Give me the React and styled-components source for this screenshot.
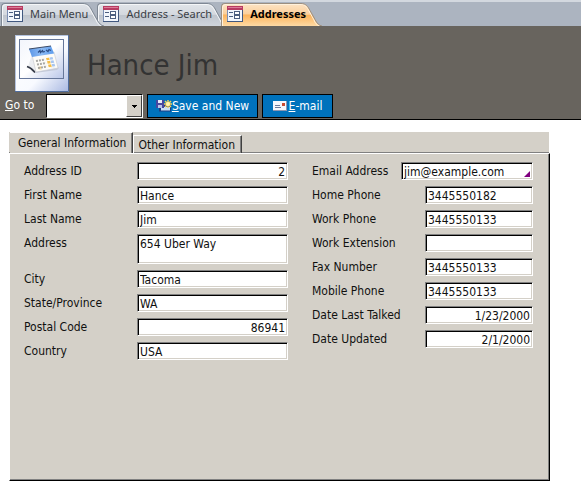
import React, { useState } from "react";
import styled, { createGlobalStyle } from "styled-components";

const GlobalStyle = createGlobalStyle`
  *, *::before, *::after {
    box-sizing: border-box;
  }

  body {
    margin: 0;
    background: #ffffff;
    color: #101010;
    font-family: "DejaVu Sans Condensed", "DejaVu Sans", sans-serif;
    font-size: 12px;
    line-height: 16px;
  }

  button, input, select, textarea {
    font: inherit;
    color: inherit;
    margin: 0;
    border-radius: 0;
  }
`;

/* document tabs */

const TabBar = styled.nav`
  display: flex;
  height: 26px;
  padding: 1px 0 0 1px;
  border-top: 2px solid #d3d8df;
  background: #acb4c0;
  isolation: isolate;
`;

const DocTab = styled.button`
  position: relative;
  z-index: ${(p) => p.$layer};
  display: flex;
  align-items: center;
  gap: 7px;
  height: 23px;
  padding: 0 9px 1px 6px;
  border: 0;
  background: none;
  color: ${(p) => (p.$active ? "#000000" : "#3b3f46")};
  font-family: "Noto Sans", "Open Sans", sans-serif;
  font-size: 11px;
  font-weight: ${(p) => (p.$active ? 700 : 400)};
  white-space: nowrap;

  > svg, > span {
    position: relative;
  }
`;

const TabShape = styled.i`
  position: absolute;
  inset: 0 -7px 0 0;
  display: flex;
`;

const TabFill = styled.i`
  flex: 1;
  border: solid ${(p) => (p.$active ? "#9c8f80" : "#7f8894")};
  border-width: 1px 0 0 1px;
  border-radius: 4px 0 0 0;
  box-shadow: inset 1px 1px 0 ${(p) => (p.$active ? "#fff1dc" : "#f4f6f8")};
  background: ${(p) =>
    p.$active
      ? "linear-gradient(#fde3c4 0, #fbd09c 45%, #fdb45c 50%, #fedaa4 100%)"
      : "linear-gradient(#e0e4e9 0, #d4d8de 50%, #bfc5cd 52%, #d0d5dc 100%)"};
`;

/* header */

const Header = styled.header`
  padding: 9px 0 1px;
  border-bottom: 1px solid #000000;
  background: #68645e;
`;

const TitleRow = styled.div`
  display: flex;
  align-items: center;
  gap: 18px;
  padding: 0 15px;
`;

const Title = styled.h1`
  margin: 0;
  padding-top: 4px;
  color: #333333;
  font-size: 29px;
  font-weight: 400;
  line-height: 53px;
`;

const Toolbar = styled.div`
  display: flex;
  gap: 4px;
  margin-top: 2px;
  padding-left: 5px;
  color: #ffffff;
`;

const GoToLabel = styled.label`
  width: 37px;
  line-height: 22px;
`;

const ComboBox = styled.div`
  position: relative;
  width: 97px;
  height: 24px;
`;

const ComboSelect = styled.select`
  appearance: none;
  width: 100%;
  height: 100%;
  padding: 0 18px 0 4px;
  border: 1px solid;
  border-color: #000000 #ffffff #ffffff #000000;
  background: #ffffff;
  color: #000000;
`;

const ComboArrow = styled.span`
  position: absolute;
  inset: 1px 1px 1px auto;
  display: flex;
  align-items: center;
  justify-content: center;
  width: 16px;
  border: 1px solid;
  border-color: #ffffff #404040 #404040 #ffffff;
  background: #d4d0c8;
  pointer-events: none;
`;

const ActionButton = styled.button`
  display: flex;
  align-items: center;
  justify-content: center;
  gap: ${(p) => p.$gap}px;
  min-width: ${(p) => p.$width}px;
  height: 24px;
  padding: 0 4px;
  border: 1px solid #000000;
  background: #0072bc;
  white-space: nowrap;
`;

/* tab control */

const Panel = styled.main`
  margin: 12px 31px 0 9px;
`;

const PageTabs = styled.div`
  display: flex;
  align-items: flex-end;
  height: 21px;
  margin-right: 1px;
  padding-left: 1px;
  background: linear-gradient(#808080, #808080) 0 100% / 100% 1px no-repeat #d4d0c8;
`;

const PageTab = styled.button`
  height: ${(p) => (p.$active ? 21 : 18)}px;
  padding: 0 6px 0 ${(p) => (p.$active ? 8 : 4)}px;
  border: solid;
  border-width: 1px 1px 0 ${(p) => (p.$active ? 0 : 1)}px;
  border-color: #ffffff #404040 #ffffff #ffffff;
  background: ${(p) =>
    p.$active
      ? "#d4d0c8"
      : "linear-gradient(#808080, #808080) 0 100% / 100% 1px no-repeat #d4d0c8"};
  box-shadow: inset -1px 0 0 #808080;
  white-space: nowrap;
`;

const Page = styled.form`
  display: grid;
  grid-template-columns: minmax(0, 264fr) minmax(0, 221fr);
  gap: 24px;
  align-items: start;
  min-height: 328px;
  padding: 8px 16px 16px 14px;
  border: 1px solid;
  border-color: #ffffff #000000 #000000 #ffffff;
  background: #d4d0c8;
  box-shadow: inset -1px -1px 0 #808080;
`;

const Column = styled.div`
  display: flex;
  flex-direction: column;
  gap: 6px;
`;

const Row = styled.div`
  display: flex;
  position: relative;
`;

const FieldLabel = styled.label`
  flex: none;
  width: ${(p) => (p.$narrow ? 89 : 113)}px;
  height: 18px;
  line-height: 18px;
  white-space: nowrap;
`;

const Field = styled.input`
  flex: 1;
  width: 0;
  min-width: 0;
  height: ${(p) => (p.$tall ? 30 : 18)}px;
  padding: 1px 2px 0;
  border: 1px solid;
  border-color: #808080 #ffffff #ffffff #808080;
  outline: none;
  background: #ffffff;
  box-shadow: inset 1px 1px 0 #000000, inset -1px -1px 0 #d4d0c8;
  line-height: 16px;
  text-align: ${(p) => (p.$right ? "right" : "left")};
  resize: none;
  overflow: hidden;
`;

const SmartTag = styled.i`
  position: absolute;
  right: 3px;
  bottom: 3px;
  border: 3px solid;
  border-color: transparent #800080 #800080 transparent;
`;

const FormIcon = () => (
  <svg width="16" height="16" viewBox="0 0 16 16" shapeRendering="crispEdges">
    <rect width="16" height="16" fill="#7d90b5" />
    <rect x="1" y="4" width="14" height="11" fill="#f3f7fd" />
    <rect width="16" height="4" fill="#b83c62" />
    <rect x="1" y="1" width="14" height="1" fill="#dc7c98" />
    <path d="M15 4h1v12H0v-1h15z" fill="#41587f" />
    <path d="M2 6h4v1H2zM2 10h4v1H2z" fill="#4c5f80" />
    <path d="M7.500 5.500h5v3h-5zM7.500 9.500h5v3h-5z" fill="#fff" stroke="#4c5f80" />
  </svg>
);

const TabCap = ({ active }) => {
  const id = active ? "cap-active" : "cap-plain";
  const stops = active
    ? ["#fde3c4", "#fbd09c", "#fdb45c", "#fedaa4"]
    : ["#e0e4e9", "#d4d8de", "#bfc5cd", "#d0d5dc"];
  return (
    <svg width="23" height="23" viewBox="0 0 23 23">
      <defs>
        <linearGradient id={id} x1="0" y1="0" x2="0" y2="1">
          <stop offset="0" stopColor={stops[0]} />
          <stop offset="0.48" stopColor={stops[1]} />
          <stop offset="0.52" stopColor={stops[2]} />
          <stop offset="1" stopColor={stops[3]} />
        </linearGradient>
      </defs>
      <path d="M0 .5h2c5 0 7 3 9 7l5 9c2 4 4 6 7 6.500H0z" fill={`url(#${id})`} />
      <path
        d="M0 1.500h2c4 0 6 3 8 6.500l5 9c1 3 3 5 5 6"
        fill="none"
        stroke={active ? "#fff1dc" : "#f4f6f8"}
      />
      <path
        d="M0 .5h2c5 0 7 3 9 7l5 9c2 4 4 6 7 6.500"
        fill="none"
        stroke={active ? "#9c8f80" : "#7f8894"}
      />
    </svg>
  );
};

const CalendarIcon = () => (
  <svg width="54" height="57" viewBox="0 0 54 57">
    <defs>
      <linearGradient id="card" x1="0" y1="0" x2="1" y2="1">
        <stop offset="0" stopColor="#ffffff" />
        <stop offset="0.6" stopColor="#f8faff" />
        <stop offset="1" stopColor="#a9b9e2" />
      </linearGradient>
      <linearGradient id="inner" x1="0" y1="0" x2="1" y2="1">
        <stop offset="0" stopColor="#f2f5fc" />
        <stop offset="0.5" stopColor="#ffffff" />
        <stop offset="1" stopColor="#b9c6e8" />
      </linearGradient>
      <linearGradient id="band" x1="0" y1="0" x2="1" y2="0">
        <stop offset="0" stopColor="#5b96e6" />
        <stop offset="0.5" stopColor="#8ebcf5" />
        <stop offset="1" stopColor="#5c9cee" />
      </linearGradient>
    </defs>
    <rect x=".5" y=".5" width="53" height="56" fill="url(#card)" stroke="#b4c3df" />
    <path d="M53.500 0v56.500H0" fill="none" stroke="#4f6d9e" />
    <rect x="4.500" y="4.500" width="44" height="39" fill="url(#inner)" stroke="#66779a" />
    <path d="M20 38l22-3 2-2-4-3-18 4z" fill="#c3cada" />
    <path d="M17 20l-4 11 7 7 2-2z" fill="#eceef2" />
    <path d="M12 31.500c3 1 6 3 8 6" fill="none" stroke="#353b48" strokeWidth="1.500" />
    <path d="M17 20l22-3 4 16-22 4z" fill="#fdfcf8" stroke="#c6c8ce" strokeWidth=".6" />
    <path d="M14 14l22-3 3 7.500-22 3.500z" fill="url(#band)" />
    <path d="M14 14l22-3" stroke="#3b4a66" />
    <path
      d="M23 17.500l2-2 .5 2 2-2 .5 1.500 2-.5M31 15l2 1.500 1-2 2 1"
      fill="none"
      stroke="#2e4f86"
      strokeWidth="1.200"
    />
    <path d="M31 23l3-.5 3 10-3 .5z" fill="#f6bd45" />
    <path d="M34.500 22.500l3-.5 3 10-3 .5z" fill="#a8c6f0" />
    <path d="M23 32l3-.5.7 3-3 .5z" fill="#f3c76a" />
    <path
      d="M20 24l19-3M21 27.500l19-3M21.700 31l19-3M22.500 34.500l19-3"
      fill="none"
      stroke="#fdfcf8"
      strokeWidth="1"
    />
    <path
      d="M21 26l9-1.500M22 29.500l9-1.500M23 33l9-1.500"
      fill="none"
      stroke="#a9a8a4"
      strokeWidth="2"
      strokeDasharray="2 1"
    />
  </svg>
);

const SaveNewIcon = () => (
  <svg width="16" height="12" viewBox="0 0 16 12">
    <path d="M3 4h12v7.500H3z" fill="#1d3d86" />
    <path d="M5 7h9v3.500H5z" fill="#c9def5" />
    <path d="M0 0h8v8H0z" fill="#4747a0" />
    <path d="M2 0h4v3H2z" fill="#e7ebf8" />
    <path d="M2 5h4v3H2z" fill="#b9c2e6" />
    <path
      d="M12 0v8M8 4h8M9 1l6 6M15 1l-6 6"
      stroke="#f2cf58"
      strokeWidth="1.500"
    />
    <circle cx="12" cy="4" r="2" fill="#fff3ae" />
  </svg>
);

const MailIcon = () => (
  <svg width="14" height="10" viewBox="0 0 14 10" shapeRendering="crispEdges">
    <rect width="14" height="10" fill="#8c97b3" />
    <rect width="13" height="9" fill="#f4f7fc" />
    <path d="M9 2h3v3H9z" fill="#c84a32" />
    <path d="M2 4h5v1H2zM2 6h6v1H2z" fill="#6b7b9c" />
  </svg>
);

const docTabs = ["Main Menu", "Address - Search", "Addresses"];

const leftFields = [
  { id: "addressId", label: "Address ID", value: "2", right: true },
  { id: "firstName", label: "First Name", value: "Hance" },
  { id: "lastName", label: "Last Name", value: "Jim" },
  { id: "address", label: "Address", value: "654 Uber Way", tall: true },
  { id: "city", label: "City", value: "Tacoma" },
  { id: "state", label: "State/Province", value: "WA" },
  { id: "postalCode", label: "Postal Code", value: "86941", right: true },
  { id: "country", label: "Country", value: "USA" },
];

const rightFields = [
  { id: "email", label: "Email Address", value: "jim@example.com", narrow: true, tag: true },
  { id: "homePhone", label: "Home Phone", value: "3445550182" },
  { id: "workPhone", label: "Work Phone", value: "3445550133" },
  { id: "workExt", label: "Work Extension", value: "" },
  { id: "fax", label: "Fax Number", value: "3445550133" },
  { id: "mobile", label: "Mobile Phone", value: "3445550133" },
  { id: "lastTalked", label: "Date Last Talked", value: "1/23/2000", right: true },
  { id: "updated", label: "Date Updated", value: "2/1/2000", right: true },
];

const FieldColumn = ({ fields }) => (
  <Column>
    {fields.map((f) => (
      <Row key={f.id}>
        <FieldLabel htmlFor={f.id} $narrow={f.narrow}>
          {f.label}
        </FieldLabel>
        <Field
          as={f.tall ? "textarea" : "input"}
          id={f.id}
          defaultValue={f.value}
          $tall={f.tall}
          $right={f.right}
        />
        {f.tag && <SmartTag />}
      </Row>
    ))}
  </Column>
);

const App = () => {
  const [current, setCurrent] = useState("Addresses");

  return (
    <>
      <GlobalStyle />
      <TabBar>
        {docTabs.map((name, i) => {
          const active = name === current;
          return (
            <DocTab
              key={name}
              type="button"
              $active={active}
              $layer={active ? 9 : docTabs.length - i}
              onClick={() => setCurrent(name)}
            >
              <TabShape>
                <TabFill $active={active} />
                <TabCap active={active} />
              </TabShape>
              <FormIcon />
              <span>{name}</span>
            </DocTab>
          );
        })}
      </TabBar>

      <Header>
        <TitleRow>
          <CalendarIcon />
          <Title>Hance Jim</Title>
        </TitleRow>
        <Toolbar>
          <GoToLabel htmlFor="goto">
            <u>G</u>o to
          </GoToLabel>
          <ComboBox>
            <ComboSelect id="goto" defaultValue="">
              <option value=""></option>
            </ComboSelect>
            <ComboArrow>
              <svg width="5" height="3" viewBox="0 0 5 3" shapeRendering="crispEdges">
                <path d="M0 0h5v1H0zM1 1h3v1H1zM2 2h1v1H2z" />
              </svg>
            </ComboArrow>
          </ComboBox>
          <ActionButton type="button" $gap={0} $width={111}>
            <SaveNewIcon />
            <span>
              <u>S</u>ave and New
            </span>
          </ActionButton>
          <ActionButton type="button" $gap={2} $width={71}>
            <MailIcon />
            <span>
              <u>E</u>-mail
            </span>
          </ActionButton>
        </Toolbar>
      </Header>

      <Panel>
        <PageTabs>
          <PageTab type="button" $active>
            General Information
          </PageTab>
          <PageTab type="button">Other Information</PageTab>
        </PageTabs>
        <Page>
          <FieldColumn fields={leftFields} />
          <FieldColumn fields={rightFields} />
        </Page>
      </Panel>
    </>
  );
};

export default App;
